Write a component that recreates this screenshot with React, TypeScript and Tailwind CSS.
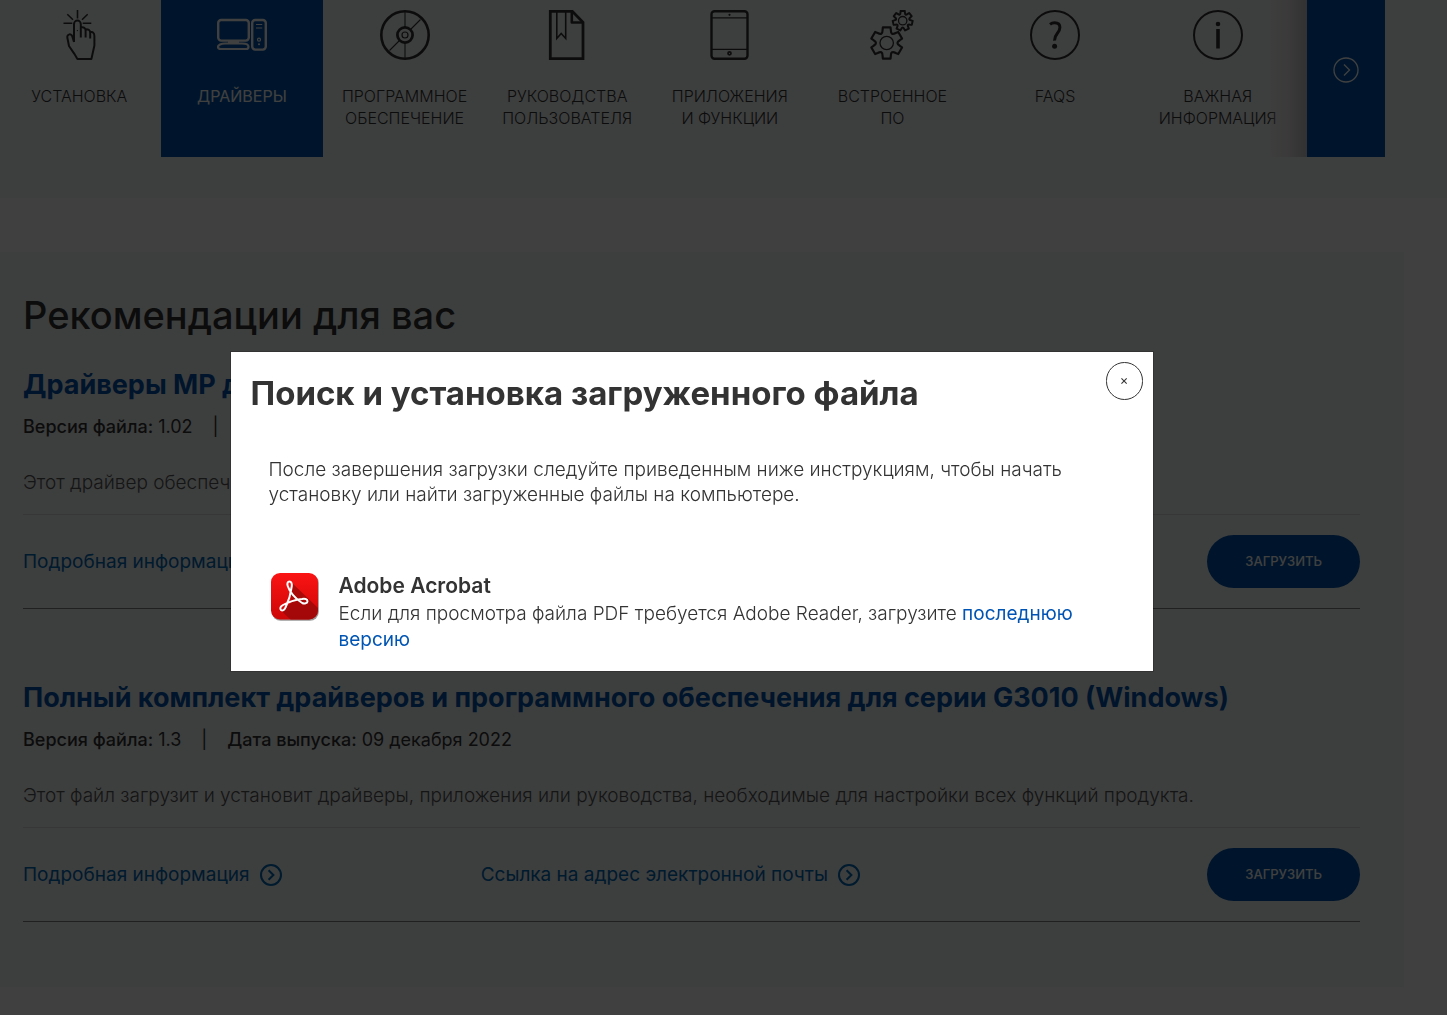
import React from "react";

interface SupportTab {
  label: string[];
  icon: React.ReactNode;
  active?: boolean;
}

interface Download {
  title: string;
  version: string;
  date: string;
  description: string;
}

// Contour of a gear with rounded hollows between its teeth
function gearPath(cx: number, cy: number, r: number, teeth: number) {
  const point = (angle: number, radius: number) =>
    `${(cx + radius * Math.sin(angle)).toFixed(2)} ${(cy - radius * Math.cos(angle)).toFixed(2)}`;
  const step = (Math.PI * 2) / teeth;
  const half = step * 0.23;
  let d = `M${point(-half, r)}`;
  for (let i = 0; i < teeth; i++) {
    const a = i * step;
    d += `L${point(a + half, r)}L${point(a + half * 1.3, r * 0.84)}`;
    d += `Q${point(a + step / 2, r * 0.52)} ${point(a + step - half * 1.3, r * 0.84)}`;
    d += `L${point(a + step - half, r)}`;
  }
  return d + "Z";
}

function TabIcon({ children }: { children: React.ReactNode }) {
  return (
    <svg
      viewBox="0 0 50 50"
      className="size-[50px]"
      fill="none"
      stroke="currentColor"
      strokeWidth="2"
      strokeLinejoin="round"
      aria-hidden="true"
    >
      {children}
    </svg>
  );
}

const tabs: SupportTab[] = [
  {
    label: ["Установка"],
    icon: (
      <TabIcon>
        <path
          d="M23.5 0v8.5M9.5 13.3h8.8M28.7 13.3h8.6M13.3 4.2l5.7 5.6M33.7 4.2 28 9.8"
          strokeWidth="1.6"
        />
        <path d="M20 32V14a3.3 3.3 0 0 1 6.8 0v13.500M20 32l-1.600-5.400c-.6-2-2.200-2.600-3.600-2-1.400.5-1.700 1.900-1.400 3.400l1.600 8 5.200 7.600 3.200 5.400h14l3-13.500V26c0-3.400-2.200-4.600-4.500-4.200M26.800 17.500c3.200-.6 4.800.6 4.800 3v7M31.600 19.300c3-.2 4.600 1 4.600 3.600v5.600" />
        <circle cx="23.4" cy="20.6" r=".7" fill="currentColor" stroke="none" />
      </TabIcon>
    ),
  },
  {
    label: ["Драйверы"],
    active: true,
    icon: (
      <TabIcon>
        <rect x="1.2" y="10" width="30.6" height="20.6" rx="3" strokeWidth="2.4" />
        <path
          d="M8 33.5h17c4 0 6.5 1.5 6.5 3.2S30.5 39 29 39H4c-1.6 0-3-.8-3-2.3s3-3.200 7-3.200ZM11 31.700h11"
          strokeWidth="2.2"
        />
        <rect x="35.2" y="10" width="13.6" height="29.600" rx="3" strokeWidth="2.4" />
        <path d="M39 14.500h6.200M39 18h6.200" strokeWidth="1.2" />
        <circle cx="42" cy="29.7" r="1.5" strokeWidth="1.2" />
        <circle cx="42" cy="34.2" r="1" fill="currentColor" stroke="none" />
      </TabIcon>
    ),
  },
  {
    label: ["Программное", "обеспечение"],
    icon: (
      <TabIcon>
        <circle cx="25" cy="25" r="23.7" strokeWidth="2.6" />
        <circle cx="25" cy="25" r="7.6" strokeWidth="2.8" />
        <circle cx="25" cy="25" r="3" strokeWidth="1.2" />
        <path d="M25 2v15M25 33v15M31 19l9.500-9.500M19 31l-9.500 9.500" strokeWidth="1.1" />
      </TabIcon>
    ),
  },
  {
    label: ["Руководства", "пользователя"],
    icon: (
      <TabIcon>
        <path d="M8.300 1.300h22l10.700 11v36.400H8.300Z" strokeWidth="2.800" strokeLinejoin="miter" />
        <path d="M29.800 2v10.500h11" strokeWidth="2.6" />
        <path d="M14.800 2v26.500l4.400-5 4.500 5V2" strokeWidth="1.6" strokeLinejoin="miter" />
      </TabIcon>
    ),
  },
  {
    label: ["Приложения", "и функции"],
    icon: (
      <TabIcon>
        <rect x="6.5" y="1.2" width="36" height="47.6" rx="3" strokeWidth="2.4" />
        <path d="M7 7.800h35M7 39.300h35" strokeWidth="1.2" />
        <circle cx="24.5" cy="4.8" r="1.1" fill="currentColor" stroke="none" />
        <circle cx="24.5" cy="43.3" r="1.5" strokeWidth="1.8" />
      </TabIcon>
    ),
  },
  {
    label: ["Встроенное", "ПО"],
    icon: (
      <TabIcon>
        <path d={gearPath(19.7, 33, 16, 6)} strokeWidth="2.2" />
        <circle cx="19.7" cy="33" r="6.7" strokeWidth="1.3" />
        <path d={gearPath(35.7, 10.7, 10, 7)} strokeWidth="2" />
        <circle cx="35.7" cy="10.7" r="4.2" strokeWidth="1.3" />
      </TabIcon>
    ),
  },
  {
    label: ["FAQs"],
    icon: (
      <TabIcon>
        <circle cx="25" cy="25" r="24" />
        <path
          d="M20 14.400c1.500-1.200 3-1.600 4.600-1.600 3.400 0 5.300 2 5.300 4.800 0 5.400-5.700 6.200-5.400 13"
          strokeWidth="3"
        />
        <circle cx="24.6" cy="36.3" r="2.5" fill="currentColor" stroke="none" />
      </TabIcon>
    ),
  },
  {
    label: ["Важная", "информация"],
    icon: (
      <TabIcon>
        <circle cx="25" cy="25" r="24" />
        <path d="M25 19v19.500" strokeWidth="3.6" />
        <circle cx="25" cy="14" r="2.3" fill="currentColor" stroke="none" />
      </TabIcon>
    ),
  },
];

const downloads: Download[] = [
  {
    title: "Драйверы MP для серии G3010 (Windows)",
    version: "1.02",
    date: "09 декабря 2022",
    description: "Этот драйвер обеспечивает полную поддержку функций продукта.",
  },
  {
    title: "Полный комплект драйверов и программного обеспечения для серии G3010 (Windows)",
    version: "1.3",
    date: "09 декабря 2022",
    description:
      "Этот файл загрузит и установит драйверы, приложения или руководства, необходимые для настройки всех функций продукта.",
  },
];

function CircleArrow() {
  return (
    <svg
      viewBox="0 0 22 22"
      className="size-[22px]"
      fill="none"
      stroke="currentColor"
      strokeWidth="2"
      aria-hidden="true"
    >
      <circle cx="11" cy="11" r="10" />
      <path d="m8.6 6.3 4.8 4.7-4.8 4.7" />
    </svg>
  );
}

function SupportNav() {
  return (
    <header className="bg-[#f4f8f6] pb-[41px]">
      <div className="mr-[62px] flex">
        <nav className="relative flex-1 overflow-hidden">
          <ul className="-ml-0.5 mr-2 grid h-full grid-cols-8">
            {tabs.map((tab) => (
              <li key={tab.label[0]} className="flex">
                <a
                  href="#"
                  className={`flex flex-1 flex-col items-center pt-2.5 pb-7 text-center text-[16px] leading-[22px] uppercase ${
                    tab.active ? "bg-[#0055ac] font-normal text-white" : "font-light text-[#333]"
                  }`}
                >
                  {tab.icon}
                  <span className="mt-[25px]">
                    {tab.label.map((line) => (
                      <span key={line} className="block">
                        {line}
                      </span>
                    ))}
                  </span>
                </a>
              </li>
            ))}
          </ul>
          {/* Fade where the list runs under the arrow */}
          <div className="absolute inset-y-0 right-0 w-10 bg-linear-to-r from-transparent via-[#ece4e4]/80 to-[#c8c6c6]" />
        </nav>
        <button
          type="button"
          aria-label="Далее"
          className="flex w-[78px] items-start justify-center bg-[#0055ac] pt-[57px] text-white"
        >
          <svg
            viewBox="0 0 26 26"
            className="size-[26px]"
            fill="none"
            stroke="currentColor"
            strokeWidth="1.3"
            aria-hidden="true"
          >
            <circle cx="13" cy="13" r="12" />
            <path d="m11 7.5 5.5 5.5-5.5 5.5" />
          </svg>
        </button>
      </div>
    </header>
  );
}

function DownloadItem({ title, version, date, description }: Download) {
  return (
    <article className="border-b border-[#808080]">
      <h3 className="text-[27px] leading-[34px] font-bold text-[#0055ac]">{title}</h3>
      <p className="mt-3 flex text-[18px] leading-[26px] text-[#333]">
        <span>
          <span className="font-medium">Версия файла:</span> {version}
        </span>
        <span className="px-5">|</span>
        <span>
          <span className="font-medium">Дата выпуска:</span> {date}
        </span>
      </p>
      <p className="mt-[30px] border-b border-[#dcdcdc] pb-[18px] text-[19px] leading-[26px] font-light text-[#555]">
        {description}
      </p>
      <div className="grid grid-cols-3 items-center gap-9 py-5 text-[19px] leading-[26px] text-[#0068b8]">
        <a href="#" className="flex items-center gap-2.5">
          Подробная информация
          <CircleArrow />
        </a>
        <a href="#" className="flex items-center gap-2.5">
          Ссылка на адрес электронной почты
          <CircleArrow />
        </a>
        <button
          type="button"
          className="justify-self-end rounded-full bg-[#0055ac] px-[38px] py-3.5 text-[13px] leading-[25px] font-medium text-white uppercase"
        >
          Загрузить
        </button>
      </div>
    </article>
  );
}

function AcrobatLogo() {
  return (
    <svg viewBox="0 0 48 48" className="size-12 shrink-0" aria-hidden="true">
      <defs>
        <linearGradient id="acrobat-red" x1="0" y1="0" x2="0" y2="1">
          <stop offset="0" stopColor="#fb1414" />
          <stop offset="1" stopColor="#cb0606" />
        </linearGradient>
        <clipPath id="acrobat-tile">
          <rect width="47" height="46.5" rx="9" />
        </clipPath>
      </defs>
      <rect x=".8" y="1" width="47" height="46.8" rx="9" fill="#999" />
      <g clipPath="url(#acrobat-tile)">
        <rect width="48" height="48" fill="url(#acrobat-red)" />
        <path d="M20.500 9.500 48 36v12H21L10.500 38 20 30Z" fill="#940808" opacity=".75" />
      </g>
      <path
        d="M18.500 8.500c-2 0-2.600 2-1.800 4.500 1.500 5 7.500 13 14.500 17 2 1 5.300.3 5.300-1.800 0-2.400-3-2.600-5.500-2.200-7 .8-14.500 3.500-19 6-2.500 1.400-3.500 3.500-2 5 1.500 1.200 3.500 0 4.500-2.500 2.800-6 5.500-15 6.300-21.500.3-2.500-.5-4.500-2.300-4.500Z"
        fill="none"
        stroke="#fff"
        strokeWidth="2"
      />
    </svg>
  );
}

function InstallDialog() {
  return (
    <div className="fixed inset-0 flex items-center justify-center bg-black/75 pt-2 pr-16">
      <section
        role="dialog"
        aria-modal="true"
        aria-labelledby="install-title"
        className="relative w-2/3 bg-white pt-[21px] pb-[18px] text-[#333] ring-1 ring-black/20"
      >
        <h2 id="install-title" className="px-5 text-[33px] leading-10 font-bold">
          Поиск и установка загруженного файла
        </h2>
        <button
          type="button"
          aria-label="Закрыть"
          className="absolute top-2.5 right-2.5 flex h-[38px] w-[37px] items-center justify-center rounded-full border border-[#333] text-[13px]"
        >
          ×
        </button>
        <p className="mt-11 px-[38px] text-[19px] leading-[25px] font-light">
          После завершения загрузки следуйте приведенным ниже инструкциям, чтобы начать установку или найти
          загруженные файлы на компьютере.
        </p>
        <div className="mt-[66px] flex items-start gap-5 px-10">
          <AcrobatLogo />
          <div className="text-[19px] leading-[26px] font-light">
            <h3 className="mb-0.5 text-[21px] font-semibold">Adobe Acrobat</h3>
            <p>
              Если для просмотра файла PDF требуется Adobe Reader, загрузите{" "}
              <a href="#" className="font-normal text-[#0055b4]">
                последнюю версию
              </a>
            </p>
          </div>
        </div>
      </section>
    </div>
  );
}

export default function App() {
  return (
    <div className="bg-white font-['Inter',sans-serif]">
      <SupportNav />
      <main className="mt-[54px] mr-[43px] mb-[27px] bg-[#f4f8f6] pt-[39px] pr-11 pb-[65px] pl-[23px]">
        <h2 className="mb-[29px] text-[38px] leading-[48px] font-medium text-[#333]">Рекомендации для вас</h2>
        <div className="flex flex-col gap-[72px]">
          {downloads.map((item) => (
            <DownloadItem key={item.title} {...item} />
          ))}
        </div>
      </main>
      <InstallDialog />
    </div>
  );
}
